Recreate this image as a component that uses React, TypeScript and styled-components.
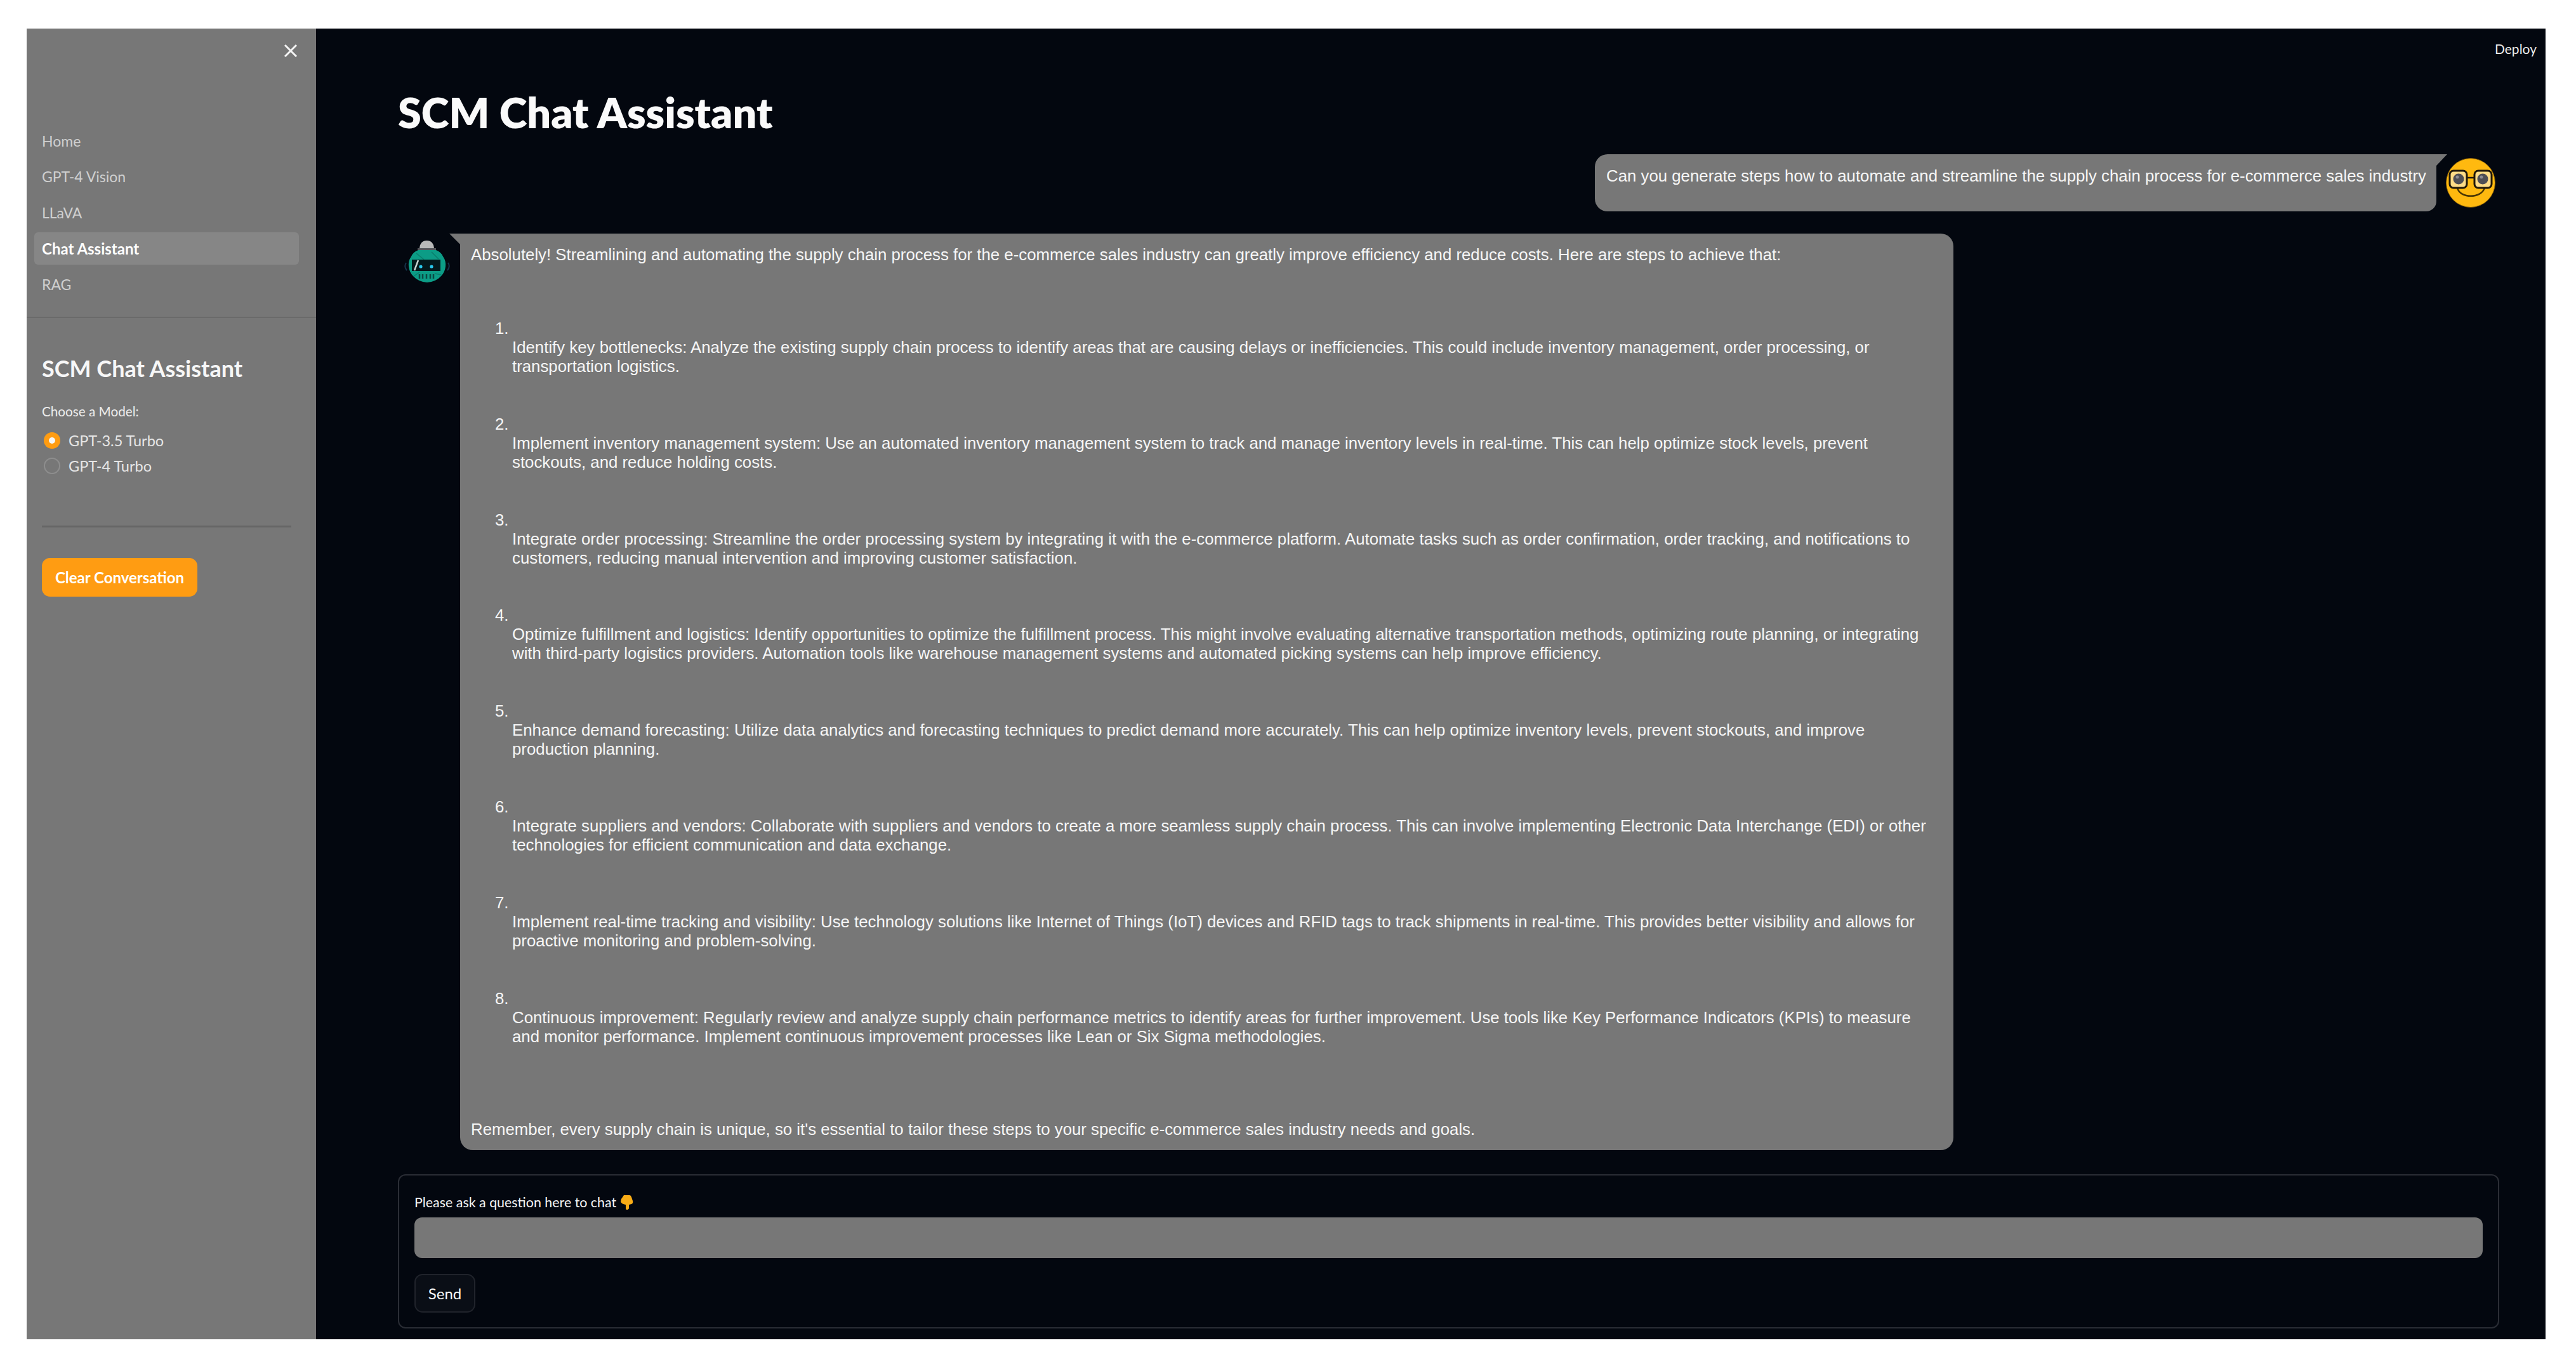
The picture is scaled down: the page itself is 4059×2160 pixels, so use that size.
import React from 'react'
import styled, { createGlobalStyle } from 'styled-components'

const GlobalStyle = createGlobalStyle`
html, body {
    margin: 0;
    padding: 0;
    background: #ffffff;
}
* {
    box-sizing: border-box;
}
`

const Frame = styled.div`
width: 4059px;
height: 2160px;
padding: 45px 48px 50px 42px;
display: flex;
font-family: "Lato", "Noto Sans", sans-serif;
`

const Sidebar = styled.aside`
width: 456px;
flex-shrink: 0;
background-color: #777777;
display: flex;
flex-direction: column;
`

const CloseRow = styled.div`
height: 131px;
padding: 24px 29px 0 0;
display: flex;
justify-content: flex-end;
align-items: flex-start;
color: #f4f4f4;
`

const NavList = styled.nav`
display: flex;
flex-direction: column;
padding: 20px 27px 20px 12px;
border-bottom: 2px solid #6a6a6a;
`

const NavItem = styled.a<{ $active?: boolean }>`
height: 51px;
margin-bottom: 5.5px;
padding-left: 12px;
display: flex;
align-items: center;
border-radius: 6px;
font-size: ${p => (p.$active ? '24px' : '23px')};
color: ${p => (p.$active ? '#ffffff' : '#cfcfcf')};
font-weight: ${p => (p.$active ? 700 : 400)};
background-color: ${p => (p.$active ? '#868686' : 'transparent')};
`

const SidebarBody = styled.div`
padding: 0 39px 0 24px;
display: flex;
flex-direction: column;
`

const SidebarTitle = styled.h2`
margin: 55px 0 0;
font-size: 36px;
line-height: 48px;
font-weight: 700;
color: #f7f7f7;
white-space: nowrap;
`

const ModelLabel = styled.div`
margin: 29px 0 11px;
font-size: 20.7px;
line-height: 30px;
color: #ececec;
`

const RadioRow = styled.label`
height: 40px;
display: flex;
align-items: center;
gap: 13px;
padding-left: 3px;
font-size: 23.5px;
color: #e6e6e6;
`

const RadioDot = styled.span<{ $checked?: boolean }>`
width: 26px;
height: 26px;
border-radius: 50%;
display: flex;
align-items: center;
justify-content: center;
background-color: ${p => (p.$checked ? '#ff9c12' : 'transparent')};
border: ${p => (p.$checked ? 'none' : '2px solid #8e8e8e')};
>i{
    width: 10px;
    height: 10px;
    border-radius: 50%;
    background-color: #f6f6f6;
}
`

const SideRule = styled.div`
height: 3px;
margin-top: 74px;
background-color: #666666;
`

const ClearButton = styled.button`
width: 245px;
height: 61px;
margin-top: 48.5px;
padding: 0;
border: none;
border-radius: 13px;
background-color: #ff9c12;
color: #ffffff;
font-family: inherit;
font-size: 24px;
font-weight: 700;
`

const Main = styled.main`
flex: 1;
min-width: 0;
background-color: #03070f;
padding: 17px 73px 17px 129px;
display: flex;
flex-direction: column;
`

const DeployRow = styled.div`
height: 30px;
margin-right: -59px;
display: flex;
justify-content: flex-end;
font-size: 21px;
line-height: 30px;
color: #ececec;
`

const PageTitle = styled.h1`
margin: 44px 0 0;
font-size: 66.5px;
line-height: 80px;
font-weight: 800;
color: #fafafa;
`

const ChatArea = styled.section`
margin: 27px 0 0;
display: flex;
flex-direction: column;
gap: 35px;
font-family: "Liberation Sans", Arial, sans-serif;
font-size: 25.8px;
line-height: 30px;
color: #f6f6f6;
`

const UserRow = styled.div`
display: flex;
justify-content: flex-end;
align-items: flex-start;
gap: 15px;
padding-right: 6px;
>svg{
    margin-top: 6px;
}
`

const UserBubble = styled.div`
position: relative;
width: 1326px;
height: 90px;
padding: 19px 16px 0 18px;
background-color: #777777;
border-radius: 20px 0 16px 20px;
white-space: nowrap;
&::after{
    content: "";
    position: absolute;
    top: 0;
    left: 100%;
    border-top: 18px solid #777777;
    border-right: 17px solid transparent;
}
`

const BotRow = styled.div`
display: flex;
align-items: flex-start;
gap: 12px;
padding-left: 8px;
>svg{
    margin-top: 5px;
}
`

const BotBubble = styled.div`
position: relative;
width: 2353px;
padding: 18px 37px 18px 17px;
background-color: #777777;
border-radius: 0 20px 20px 20px;
&::before{
    content: "";
    position: absolute;
    top: 0;
    right: 100%;
    border-top: 17px solid #777777;
    border-left: 17px solid transparent;
}
`

const BubbleText = styled.p`
margin: 0;
`

const StepList = styled.ol`
list-style: none;
margin: 86px 0 116px;
padding: 0 0 0 38px;
`

const Step = styled.li`
margin-bottom: 60.8px;
>b{
    display: block;
    font-weight: 400;
}
>p{
    margin: 0 0 0 27px;
}
`

const AskForm = styled.form`
margin-top: 38px;
height: 243px;
padding: 27px 24px 0 24px;
border: 2px solid #2a2d35;
border-radius: 12px;
`

const AskLabel = styled.label`
height: 30px;
display: flex;
align-items: center;
gap: 5px;
font-size: 21.4px;
color: #f4f4f4;
`

const AskInput = styled.input`
display: block;
width: 100%;
height: 64px;
margin-top: 9px;
border: none;
border-radius: 12px;
background-color: #777777;
`

const SendButton = styled.button`
display: block;
width: 96px;
height: 61px;
margin-top: 25px;
padding: 0;
border: 2px solid #20232b;
border-radius: 13px;
background-color: #0a0e16;
color: #fafafa;
font-family: inherit;
font-size: 24px;
`

const steps = [
    'Identify key bottlenecks: Analyze the existing supply chain process to identify areas that are causing delays or inefficiencies. This could include inventory management, order processing, or transportation logistics.',
    'Implement inventory management system: Use an automated inventory management system to track and manage inventory levels in real-time. This can help optimize stock levels, prevent stockouts, and reduce holding costs.',
    'Integrate order processing: Streamline the order processing system by integrating it with the e-commerce platform. Automate tasks such as order confirmation, order tracking, and notifications to customers, reducing manual intervention and improving customer satisfaction.',
    'Optimize fulfillment and logistics: Identify opportunities to optimize the fulfillment process. This might involve evaluating alternative transportation methods, optimizing route planning, or integrating with third-party logistics providers. Automation tools like warehouse management systems and automated picking systems can help improve efficiency.',
    'Enhance demand forecasting: Utilize data analytics and forecasting techniques to predict demand more accurately. This can help optimize inventory levels, prevent stockouts, and improve production planning.',
    'Integrate suppliers and vendors: Collaborate with suppliers and vendors to create a more seamless supply chain process. This can involve implementing Electronic Data Interchange (EDI) or other technologies for efficient communication and data exchange.',
    'Implement real-time tracking and visibility: Use technology solutions like Internet of Things (IoT) devices and RFID tags to track shipments in real-time. This provides better visibility and allows for proactive monitoring and problem-solving.',
    'Continuous improvement: Regularly review and analyze supply chain performance metrics to identify areas for further improvement. Use tools like Key Performance Indicators (KPIs) to measure and monitor performance. Implement continuous improvement processes like Lean or Six Sigma methodologies.',
]

const CloseIcon = () => (
    <svg width="22" height="22" viewBox="0 0 22 22" fill="none" stroke="currentColor" strokeWidth="3">
        <path d="M2 2 L20 20 M20 2 L2 20" />
    </svg>
)

const NerdAvatar = () => (
    <svg width="78" height="78" viewBox="0 0 78 78" style={{ flexShrink: 0 }}>
        <circle cx="39" cy="39" r="38.5" fill="#ffb90f" stroke="#8a6208" strokeWidth="1" />
        <path d="M18 47 C22 64 56 64 61 47" fill="none" stroke="#4a3604" strokeWidth="2.5" />
        <rect x="6" y="20" width="27" height="27" rx="6" fill="#ffdc87" stroke="#20180a" strokeWidth="3" />
        <rect x="45" y="20" width="27" height="27" rx="6" fill="#ffdc87" stroke="#20180a" strokeWidth="3" />
        <path d="M33 31 H45" stroke="#20180a" strokeWidth="2.5" />
        <circle cx="20" cy="33" r="8.5" fill="#4f4f55" />
        <circle cx="58" cy="33" r="8.5" fill="#4f4f55" />
        <circle cx="18" cy="30" r="2.5" fill="#8d8d92" />
        <circle cx="56" cy="30" r="2.5" fill="#8d8d92" />
    </svg>
)

const BotAvatar = () => (
    <svg width="78" height="78" viewBox="0 0 78 78" style={{ flexShrink: 0 }}>
        <path d="M5 41 Q1 47 6 53 M71 41 Q75 47 70 53" fill="none" stroke="#16324a" strokeWidth="2" />
        <path d="M26 20 C26 10 31 6 37.5 6 C44 6 49 10 49 20 Z" fill="#b9b9b9" />
        <rect x="23" y="18" width="29" height="3" fill="#54585c" />
        <path d="M24 21 H52 Q60 24 63 31 Q68 38 67 47 Q66 56 60 62 Q52 71 38 72 Q24 71 16 62 Q10 56 9 47 Q8 38 13 31 Q16 24 24 21 Z" fill="#0c9c86" />
        <path d="M21 26 L33 36 M45 24 L56 35 M17 62 L26 56 M50 58 L60 60" stroke="#0a7d6c" strokeWidth="1.5" />
        <rect x="14" y="36" width="45" height="18" fill="#04181c" />
        <path d="M24 37 L18 53" stroke="#c9d3d3" strokeWidth="2.5" />
        <circle cx="28" cy="47" r="2.6" fill="#29c8ee" />
        <circle cx="45" cy="47" r="2.6" fill="#29c8ee" />
        <path d="M26 59 V66 M31 59 V66 M37 59 V66 M43 59 V66 M48 59 V66" stroke="#0a4a44" strokeWidth="2.5" />
    </svg>
)

const PointDownIcon = () => (
    <svg width="23" height="24" viewBox="0 0 23 24">
        <path d="M7 1 H16 Q18 1 19 4 L21 10 Q22 14 19 15 L15 16 V22 Q14 24 12 24 Q10 24 10 22 V16 Q3 15 2 11 Q2 7 5 4 Z" fill="#f9ac16" />
    </svg>
)

export default function App() {
    return (
        <>
            <GlobalStyle />
            <Frame>
                <Sidebar>
                    <CloseRow><CloseIcon /></CloseRow>
                    <NavList>
                        <NavItem>Home</NavItem>
                        <NavItem>GPT-4 Vision</NavItem>
                        <NavItem>LLaVA</NavItem>
                        <NavItem $active>Chat Assistant</NavItem>
                        <NavItem>RAG</NavItem>
                    </NavList>
                    <SidebarBody>
                        <SidebarTitle>SCM Chat Assistant</SidebarTitle>
                        <ModelLabel>Choose a Model:</ModelLabel>
                        <RadioRow><RadioDot $checked><i /></RadioDot>GPT-3.5 Turbo</RadioRow>
                        <RadioRow><RadioDot />GPT-4 Turbo</RadioRow>
                        <SideRule />
                        <ClearButton>Clear Conversation</ClearButton>
                    </SidebarBody>
                </Sidebar>
                <Main>
                    <DeployRow>Deploy</DeployRow>
                    <PageTitle>SCM Chat Assistant</PageTitle>
                    <ChatArea>
                        <UserRow>
                            <UserBubble>Can you generate steps how to automate and streamline the supply chain process for e-commerce sales industry</UserBubble>
                            <NerdAvatar />
                        </UserRow>
                        <BotRow>
                            <BotAvatar />
                            <BotBubble>
                                <BubbleText>Absolutely! Streamlining and automating the supply chain process for the e-commerce sales industry can greatly improve efficiency and reduce costs. Here are steps to achieve that:</BubbleText>
                                <StepList>
                                    {steps.map((s, i) => (
                                        <Step key={i}>
                                            <b>{i + 1}.</b>
                                            <p>{s}</p>
                                        </Step>
                                    ))}
                                </StepList>
                                <BubbleText>Remember, every supply chain is unique, so it's essential to tailor these steps to your specific e-commerce sales industry needs and goals.</BubbleText>
                            </BotBubble>
                        </BotRow>
                    </ChatArea>
                    <AskForm>
                        <AskLabel>Please ask a question here to chat <PointDownIcon /></AskLabel>
                        <AskInput />
                        <SendButton type="button">Send</SendButton>
                    </AskForm>
                </Main>
            </Frame>
        </>
    )
}
